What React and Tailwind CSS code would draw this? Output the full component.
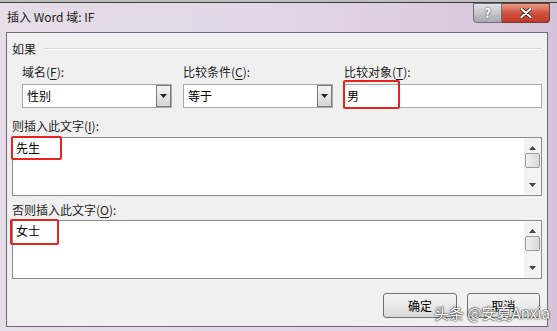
import React from "react";

const FONT = { fontFamily: '"Noto Sans CJK SC", "Noto Sans", sans-serif' };

function U({ children }) {
  return <span className="underline underline-offset-2">{children}</span>;
}

function Label({ children, className = "" }) {
  return <div className={"h-4 text-[12px] leading-4 text-[#1e1e1e] whitespace-nowrap " + className}>{children}</div>;
}

function Combo({ value }) {
  return (
    <div className="h-6 w-[150px] border border-[#a9a9a9] bg-white flex items-center justify-between">
      <span className="pl-[4px] text-[12px] leading-4 text-black">{value}</span>
      <div className="h-[22px] w-[15px] border border-[#7b7b7b] bg-gradient-to-b from-[#f4f4f4] to-[#d6d6d6] flex items-center justify-center">
        <svg width="7" height="4" viewBox="0 0 7 4"><path d="M0 0h7L3.5 4z" fill="#222" /></svg>
      </div>
    </div>
  );
}

function ScrollBar() {
  return (
    <div className="w-[17px] h-full bg-[#f3f3f3] flex flex-col items-center justify-between py-[8px]">
      <div className="flex flex-col items-center gap-[3px]">
        <svg width="7" height="4" viewBox="0 0 7 4"><path d="M0 4h7L3.5 0z" fill="#444" /></svg>
        <div className="w-[15px] h-[15px] border border-[#9a9a9a] rounded-[2px] bg-gradient-to-r from-[#f2f2f2] to-[#d9d9d9]" />
      </div>
      <svg width="7" height="4" viewBox="0 0 7 4"><path d="M0 0h7L3.5 4z" fill="#444" /></svg>
    </div>
  );
}

function TextArea({ value, redClass }) {
  return (
    <div className="relative h-[59px] border border-[#8c8c8c] bg-white flex">
      <div className="flex-1 pl-[3px] pt-[2px] text-[12px] leading-4 text-black">{value}</div>
      <ScrollBar />
      <div className={"absolute border-2 border-[#e8231f] rounded-[2px] " + redClass} />
    </div>
  );
}

function Btn({ children, w }) {
  return (
    <div className={"h-[25px] border border-[#707070] rounded-[3px] bg-gradient-to-b from-[#f3f3f3] via-[#ebebeb] to-[#d8d8d8] flex items-center justify-center text-[12px] text-black " + w}>
      {children}
    </div>
  );
}

export default function App() {
  return (
    <div className="relative w-[557px] h-[331px] overflow-hidden bg-[#cfc4d4] flex flex-col" style={FONT}>
      <div className="h-[3px] bg-[#bdbdbd] border-b border-[#3c3c3c]" />
      <div className="flex-1 flex flex-col bg-gradient-to-r from-[#e6dde8] via-[#e2d6e6] to-[#d5c3da] rounded-tr-[6px]">
        <div className="h-[29px] flex items-start justify-between pl-[7px] pr-[7px]">
          <div className="pt-[6px] text-[12px] leading-4 text-[#1a1a1a]">插入 Word 域: IF</div>
          <div className="flex">
            <div className="w-[29px] h-[20px] rounded-bl-[4px] border border-[#6f6f78] bg-gradient-to-b from-[#e2e2e6] to-[#a9a9b1] flex items-center justify-center text-white font-bold text-[13px] [text-shadow:0_0_2px_#333]">?</div>
            <div className="w-[48px] h-[20px] rounded-br-[4px] border border-[#6f3b33] border-l-0 bg-gradient-to-b from-[#e59a88] via-[#d0533d] to-[#c0392b] flex items-center justify-center">
              <svg width="12" height="10" viewBox="0 0 12 10">
                <path d="M1.5 1L10.5 9M10.5 1L1.5 9" stroke="#3a1410" strokeWidth="3.6" strokeLinecap="round" />
                <path d="M1.5 1L10.5 9M10.5 1L1.5 9" stroke="#fff" strokeWidth="2.2" strokeLinecap="round" />
              </svg>
            </div>
          </div>
        </div>
        <div className="ml-[6px] mr-[9px] mb-[4px] flex-1 border border-[#6e6a78] bg-[#f0f0f0] flex flex-col px-[5px] pt-[8px]">
          <div className="h-4 flex items-center">
            <span className="text-[12px] leading-4 text-[#1e1e1e]">如果</span>
            <div className="flex-1 ml-[9px] h-[2px] border-t border-[#d5d5d5] border-b border-b-white" />
          </div>
          <div className="mt-[7px] ml-[10px] flex">
            <div className="flex flex-col gap-[4px]">
              <Label>域名(<U>F</U>):</Label>
              <Combo value="性别" />
            </div>
            <div className="ml-[11px] flex flex-col gap-[4px]">
              <Label>比较条件(<U>C</U>):</Label>
              <Combo value="等于" />
            </div>
            <div className="ml-[10px] flex flex-col gap-[4px]">
              <Label className="pl-[1px]">比较对象(<U>T</U>):</Label>
              <div className="relative h-6 w-[199px] border border-[#a9a9a9] bg-white flex items-center">
                <span className="pl-[3px] text-[12px] leading-4 text-black">男</span>
                <div className="absolute left-[-1px] top-[-5px] w-[57px] h-[29px] border-2 border-[#e8231f] rounded-[2px]" />
              </div>
            </div>
          </div>
          <Label className="mt-[10px]">则插入此文字(<U>I</U>):</Label>
          <div className="mt-[3px]">
            <TextArea value="先生" redClass="left-[-2px] top-[-2px] w-[51px] h-[24px]" />
          </div>
          <Label className="mt-[6px]">否则插入此文字(<U>O</U>):</Label>
          <div className="mt-[2px]">
            <TextArea value="女士" redClass="left-[-3px] top-[-2px] w-[49px] h-[26px]" />
          </div>
          <div className="mt-[14px] mr-[2px] flex justify-end gap-[10px]">
            <Btn w="w-[74px]">确定</Btn>
            <Btn w="w-[73px]">取消</Btn>
          </div>
        </div>
      </div>
      <div className="absolute left-[434px] top-[304px] text-[15px] leading-[18px] text-white whitespace-nowrap [text-shadow:0_0_2px_#222,0_0_1px_#000]">
        头条 @安夏Anxia
      </div>
    </div>
  );
}
